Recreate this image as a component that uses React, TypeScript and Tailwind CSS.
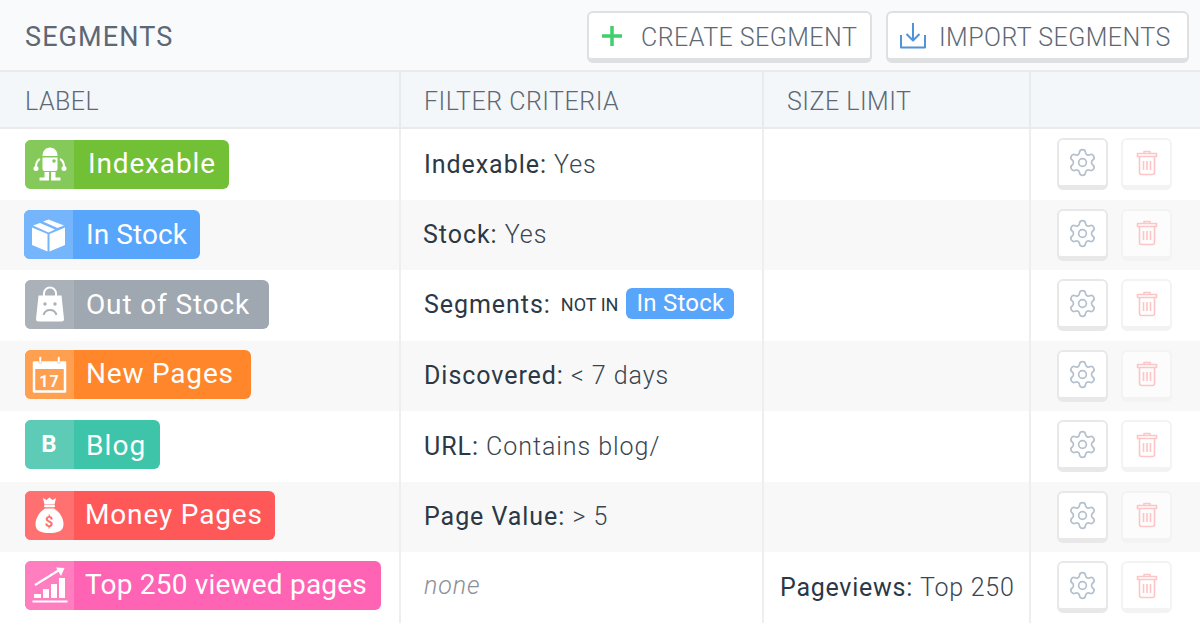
import type { ReactNode } from "react";
import { Settings } from "lucide-react";

function RobotIcon() {
  return (
    <svg width="34" height="34" viewBox="0 0 34 34" fill="white">
      <path d="M9.500 9C9.500 4 12.500 .5 17 .5S24.500 4 24.500 9z" />
      <path d="M9.500 10.500h15V22a2 2 0 0 1-2 2h-11a2 2 0 0 1-2-2z" />
      <circle cx="21" cy="14" r="1.800" fill="#85c95a" />
      <rect x="11.500" y="25" width="4.500" height="6" />
      <rect x="18" y="25" width="4.500" height="6" />
      <rect x="6.500" y="30.500" width="9.500" height="3" rx="0.500" />
      <rect x="18" y="30.500" width="9.500" height="3" rx="0.500" />
      <path d="M7 12C4 13.500 3 17 3 20" stroke="white" strokeWidth="2" fill="none" />
      <path d="M27 12c3 1.500 4 5 4 8" stroke="white" strokeWidth="2" fill="none" />
      <circle cx="3" cy="21.500" r="2.500" />
      <circle cx="31" cy="21.500" r="2.500" />
    </svg>
  );
}

function BoxIcon() {
  return (
    <svg width="35" height="34" viewBox="0 0 35 34" fill="white">
      <path d="M1 9.500 16.500 16v17.500L1 27z" />
      <path d="M34 9.500 18.500 16v17.500L34 27z" />
      <path d="M2 7.500 9 5l15 6.500L17.500 14.500z" />
      <path d="M12 3.500 17.500 1.500 33 7.500 26.500 10z" />
    </svg>
  );
}

function BagIcon() {
  return (
    <svg width="30" height="36" viewBox="0 0 30 36" fill="white">
      <path d="M9 10V7.500a6 6 0 0 1 12 0V10" fill="none" stroke="white" strokeWidth="2" />
      <path d="M3.500 9.500h23L29 33a2.500 2.500 0 0 1-2.500 2.500h-23A2.500 2.500 0 0 1 1 33z" />
      <circle cx="10" cy="18" r="1.700" fill="#aab1b9" />
      <circle cx="20" cy="18" r="1.700" fill="#aab1b9" />
      <path d="M8.500 29c1-3.500 3.500-5 6.500-5s5.500 1.500 6.500 5" fill="none" stroke="#aab1b9" strokeWidth="2" />
    </svg>
  );
}

function CalendarIcon() {
  return (
    <svg width="35" height="37" viewBox="0 0 35 37" fill="none">
      <path d="M2 6.500h31v29H2z" stroke="white" strokeWidth="2.500" strokeLinejoin="round" />
      <path d="M2 6h31v7H2z" fill="white" />
      <rect x="7" y="0.500" width="2.500" height="7" rx="1.200" fill="white" stroke="#ffa04f" strokeWidth="0.500" />
      <rect x="25.500" y="0.500" width="2.500" height="7" rx="1.200" fill="white" stroke="#ffa04f" strokeWidth="0.500" />
      <text x="17.500" y="31" textAnchor="middle" fill="white" fontSize="16" fontWeight="700" fontFamily="Roboto, sans-serif">
        17
      </text>
    </svg>
  );
}

function MoneyIcon() {
  return (
    <svg width="29" height="37" viewBox="0 0 29 37" fill="white">
      <path d="M8 1l3.500 2L14.500.500 17.500 3 21 1l-1.500 6.500h-10z" />
      <rect x="9" y="8" width="11" height="2.200" rx="1" />
      <path d="M10 11.500h9C24.500 15 28.500 21 28.500 27c0 6.500-4.500 9-14 9s-14-2.500-14-9c0-6 4-12 9.500-15.500z" />
      <text x="14.500" y="30" textAnchor="middle" fill="#ff7070" fontSize="15" fontWeight="700" fontFamily="Roboto, sans-serif">
        $
      </text>
    </svg>
  );
}

function ChartIcon() {
  return (
    <svg width="36" height="36" viewBox="0 0 36 36" fill="white">
      <path d="M3 18 28 2.500" stroke="white" strokeWidth="2.200" />
      <path d="M24 .500l8.500.500-3.500 8z" />
      <rect x="2" y="27" width="7" height="4" />
      <rect x="11" y="22" width="6" height="9" />
      <rect x="19" y="17" width="6" height="14" />
      <rect x="27" y="11" width="6" height="20" />
      <rect x="0.500" y="33.500" width="35" height="2" />
    </svg>
  );
}

function TrashIcon() {
  return (
    <svg width="22" height="26" viewBox="0 0 22 26" fill="none" stroke="#fdc5c5" strokeWidth="1.600" strokeLinejoin="round">
      <path d="M8 3.500V1.500h6v2" />
      <path d="M1.500 3.500h19v3h-19z" />
      <path d="M3.500 6.500v16a2 2 0 0 0 2 2h11a2 2 0 0 0 2-2v-16" />
      <path d="M7.500 11v9M11 11v9M14.500 11v9" />
    </svg>
  );
}

interface SegmentBadgeProps {
  label: string;
  icon: ReactNode;
  bg: string;
  iconBg: string;
  pad: string;
  width: string;
  tracking: string;
}

function SegmentBadge({ label, icon, bg, iconBg, pad, width, tracking }: SegmentBadgeProps) {
  return (
    <div className={`flex h-[49px] shrink-0 overflow-hidden rounded-[6px] text-white ${bg} ${width}`}>
      <div className={`flex w-[49px] shrink-0 items-center justify-center ${iconBg}`}>{icon}</div>
      <span className={`self-center whitespace-nowrap text-[28px] leading-none ${tracking} ${pad}`}>{label}</span>
    </div>
  );
}

interface RowData {
  badge: SegmentBadgeProps;
  filter: ReactNode;
  size?: ReactNode;
  shift?: string;
  badgeShift?: string;
}

function Criteria({ name, value }: { name: string; value: string }) {
  return (
    <span>
      <span className="font-normal text-[#2c3845]">{name}:</span> <span className="font-light">{value}</span>
    </span>
  );
}

const rows: RowData[] = [
  {
    badge: { label: "Indexable", icon: <RobotIcon />, bg: "bg-[#72c036]", iconBg: "bg-[#85c95a]", pad: "pl-[14px]", width: "w-[204px]", tracking: "tracking-[0.85px]" },
    filter: <Criteria name="Indexable" value="Yes" />,
  },
  {
    badge: { label: "In Stock", icon: <BoxIcon />, bg: "bg-[#58a5fc]", iconBg: "bg-[#75b5fc]", pad: "pl-[13px]", width: "w-[176px]", tracking: "tracking-[0.1px]" },
    filter: <Criteria name="Stock" value="Yes" />,
    shift: "-ml-px",
  },
  {
    badge: { label: "Out of Stock", icon: <BagIcon />, bg: "bg-[#9fa7b0]", iconBg: "bg-[#aab1b9]", pad: "pl-[12px] pt-[2px]", width: "w-[244px]", tracking: "tracking-[0.85px]" },
    badgeShift: "-mt-[2px]",
    filter: (
      <span className="-mt-[2px] flex items-center">
        <span className="text-[#2c3845]">Segments:</span>
        <span className="ml-[10px] text-[18px] tracking-normal text-[#2c3845]">NOT IN</span>
        <span className="-mt-[2px] ml-[8px] rounded-[6px] bg-[#58a5fc] px-[10px] py-[3px] text-[24px] leading-[25px] tracking-[0.25px] text-white">In Stock</span>
      </span>
    ),
  },
  {
    badge: { label: "New Pages", icon: <CalendarIcon />, bg: "bg-[#ff862a]", iconBg: "bg-[#ff9f50]", pad: "pl-[12px] pb-[2px]", width: "w-[226px]", tracking: "tracking-[0.8px]" },
    badgeShift: "-mt-[2px]",
    filter: <Criteria name="Discovered" value="< 7 days" />,
  },
  {
    badge: { label: "Blog", icon: <span className="text-[24px] font-bold leading-none">B</span>, bg: "bg-[#3ec4a9]", iconBg: "bg-[#5dcbb5]", pad: "pl-[12px] pt-[3px]", width: "w-[135px]", tracking: "tracking-[1.1px]" },
    badgeShift: "-mt-[4px]",
    filter: <Criteria name="URL" value="Contains blog/" />,
  },
  {
    badge: { label: "Money Pages", icon: <MoneyIcon />, bg: "bg-[#ff5858]", iconBg: "bg-[#ff7070]", pad: "pl-[11px] pb-[2px]", width: "w-[250px]", tracking: "tracking-[0.85px]" },
    badgeShift: "-mt-[2px]",
    filter: <Criteria name="Page Value" value="> 5" />,
  },
  {
    badge: { label: "Top 250 viewed pages", icon: <ChartIcon />, bg: "bg-[#ff63b3]", iconBg: "bg-[#ff7ec0]", pad: "pl-[11px]", width: "w-[356px]", tracking: "tracking-[0.2px]" },
    badgeShift: "-mt-[4px]",
    filter: <span className="-mt-[3px] block font-light italic text-[#8a9099]">none</span>,
    size: <Criteria name="Pageviews" value="Top 250" />,
  },
];

function ActionButtons() {
  return (
    <div className="flex items-center gap-[13px] pl-[26px]">
      <button className="flex h-[52px] w-[51px] items-center justify-center rounded-[6px] border-2 border-b-[5px] border-[#e8e8e8] bg-white">
        <Settings size={31} strokeWidth={1.3} color="#b4c0cd" />
      </button>
      <button className="flex h-[52px] w-[51px] items-center justify-center rounded-[6px] border-2 border-b-[5px] border-[#f3f3f3] bg-white/60">
        <TrashIcon />
      </button>
    </div>
  );
}

function HeaderButton({ icon, label, width, gap }: { icon: ReactNode; label: string; width: string; gap: string }) {
  return (
    <button className={`flex h-[52px] items-center rounded-[6px] border-2 border-b-[5px] border-[#dfe0e1] bg-white pl-[11px] text-[25px] font-light tracking-[0.45px] text-[#5d6874] ${width} ${gap}`}>
      {icon}
      <span className="pt-[5px]">{label}</span>
    </button>
  );
}

export default function App() {
  return (
    <div className="h-[626px] w-[1200px] overflow-hidden bg-white font-['Roboto',sans-serif] text-[25px] text-[#3a4552]">
      <div className="flex h-[72px] items-center justify-between border-b-2 border-[#e8eaec] bg-[#f8fafc] pl-[25px] pr-[11px] pt-[4px]">
        <h1 className="text-[27px] font-normal tracking-[1.1px] text-[#5d6874]">SEGMENTS</h1>
        <div className="flex gap-[14px]">
          <HeaderButton
            width="w-[285px]"
            gap="gap-[17px]"
            label="CREATE SEGMENT"
            icon={
              <svg width="24" height="24" viewBox="0 0 24 24" fill="none" stroke="#3fcf6b" strokeWidth="3.500">
                <path d="M12 2v20M2 12h20" />
              </svg>
            }
          />
          <HeaderButton
            width="w-[303px]"
            gap="gap-[12px]"
            label="IMPORT SEGMENTS"
            icon={
              <svg width="28" height="28" viewBox="0 0 28 28" fill="none" stroke="#4f94d8" strokeWidth="2" strokeLinejoin="round">
                <path d="M14 1v17M7.500 12l6.500 6.500 6.500-6.500" />
                <path d="M2 13v12.500h24V13" />
              </svg>
            }
          />
        </div>
      </div>

      <div className="flex h-[57px] border-b-2 border-[#e8eaec] bg-[#f4f7fa] text-[25px] font-light tracking-[0.5px] text-[#5d6874]">
        <div className="flex w-[401px] items-center border-r-2 border-[#e8eaec] pl-[25px] pt-[5px]">LABEL</div>
        <div className="flex w-[363px] items-center border-r-2 border-[#e8eaec] pl-[23px] pt-[5px]">FILTER CRITERIA</div>
        <div className="flex w-[267px] items-center border-r-2 border-[#e8eaec] pl-[23px] pt-[5px]">SIZE LIMIT</div>
        <div className="flex-1" />
      </div>

      {rows.map((row, i) => (
        <div key={row.badge.label} className={`flex h-[70.5px] tracking-[0.95px] ${i % 2 === 1 ? "bg-[#f8f8f8]" : "bg-white"}`}>
          <div className="flex w-[401px] items-center border-r-2 border-[#eeeeee] pl-[25px]">
            <div className={`${row.shift ?? ""} ${row.badgeShift ?? ""}`}>
              <SegmentBadge {...row.badge} />
            </div>
          </div>
          <div className="flex w-[363px] items-center border-r-2 border-[#eeeeee] pl-[23px]">
            <div className={row.shift}>{row.filter}</div>
          </div>
          <div className="flex w-[267px] items-center whitespace-nowrap border-r-2 border-[#eeeeee] pl-[16px] tracking-[0.75px]">{row.size}</div>
          <ActionButtons />
        </div>
      ))}
    </div>
  );
}
